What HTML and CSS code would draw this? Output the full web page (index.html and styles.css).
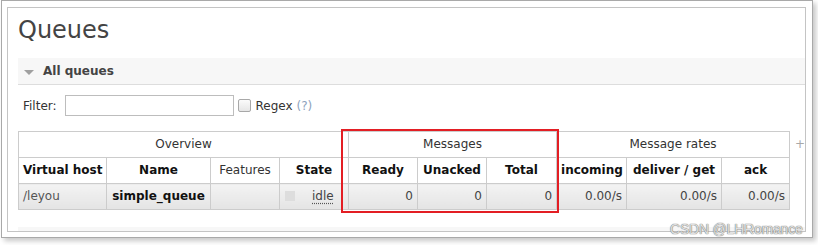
FILE: index.html
```html
<!DOCTYPE html>
<html>
<head>
<meta charset="utf-8">
<link rel="stylesheet" href="styles.css">
</head>
<body>
<div class="frame">
  <div class="page">
    <h1 class="title">Queues</h1>
    <div class="section">
      <div class="section-head"><span class="tri"></span><span class="section-title">All queues</span></div>
      <div class="filter-row">
        <span class="filter-label">Filter:</span>
        <span class="filter-input"></span>
        <span class="checkbox"></span>
        <span class="regex">Regex <span class="help">(?)</span></span>
      </div>
      <div class="table-row">
        <table class="queues">
          <colgroup>
            <col class="c-vhost"><col class="c-name"><col class="c-feat"><col class="c-state">
            <col class="c-ready"><col class="c-unacked"><col class="c-total">
            <col class="c-in"><col class="c-deliver"><col class="c-ack">
          </colgroup>
          <thead>
            <tr class="group-row">
              <th colspan="4">Overview</th>
              <th colspan="3">Messages</th>
              <th colspan="3">Message rates</th>
            </tr>
            <tr class="col-row">
              <th>Virtual host</th>
              <th>Name</th>
              <th class="light">Features</th>
              <th>State</th>
              <th>Ready</th>
              <th>Unacked</th>
              <th>Total</th>
              <th>incoming</th>
              <th>deliver / get</th>
              <th>ack</th>
            </tr>
          </thead>
          <tbody>
            <tr class="data-row">
              <td class="vhost">/leyou</td>
              <td class="name">simple_queue</td>
              <td></td>
              <td class="state"><span class="state-box"></span><abbr class="idle">idle</abbr></td>
              <td class="num">0</td>
              <td class="num">0</td>
              <td class="num">0</td>
              <td class="num">0.00/s</td>
              <td class="num">0.00/s</td>
              <td class="num">0.00/s</td>
            </tr>
          </tbody>
        </table>
        <span class="plus">+</span>
      </div>
    </div>
    <div class="section-head next-head"></div>
  </div>
  <div class="annot"></div>
  <div class="watermark">CSDN @LHRomance</div>
</div>
</body>
</html>
```

FILE: styles.css
```css
html, body {
  margin: 0;
  padding: 0;
  background: #ffffff;
}

body {
  width: 818px;
  height: 245px;
  position: relative;
  overflow: hidden;
  font-family: "DejaVu Sans", Verdana, sans-serif;
  font-size: 12px;
  color: #444444;
}

.frame {
  margin-left: 1px;
  width: 799px;
  height: 225px;
  padding: 6px 6px 5px 5px;
  border: 1px solid #a9a9a9;
  box-shadow: 3px 3px 5px rgba(0, 0, 0, 0.22);
  background: #ffffff;
}

.page {
  box-sizing: border-box;
  width: 799px;
  height: 225px;
  border: 1px solid #c4c4c4;
  padding-left: 10px;
  overflow: hidden;
}

.title {
  margin: 7px 0 0 0;
  font-size: 24px;
  line-height: 30px;
  font-weight: normal;
  color: #444444;
}

.section {
  margin-top: 13px;
}

.section-head {
  display: flex;
  align-items: center;
  height: 26px;
  padding-left: 6px;
  background: #f7f7f7;
  border-bottom: 1px solid #dddddd;
}

.tri {
  width: 0;
  height: 0;
  border-left: 5px solid transparent;
  border-right: 5px solid transparent;
  border-top: 5px solid #a0a0a0;
  margin-top: 2px;
  margin-right: 9px;
}

.section-title {
  font-weight: bold;
  color: #444444;
  line-height: 15px;
}

.filter-row {
  display: flex;
  align-items: center;
  margin-top: 10px;
  padding-left: 5px;
  height: 21px;
  color: #333333;
}

.filter-label {
  margin-right: 8px;
}

.filter-input {
  box-sizing: border-box;
  width: 169px;
  height: 21px;
  border: 1px solid #bdbdbd;
  background: #ffffff;
}

.checkbox {
  box-sizing: border-box;
  width: 13px;
  height: 13px;
  margin-left: 4px;
  margin-right: 5px;
  border: 1px solid #a8a8a8;
  border-radius: 2px;
  background: linear-gradient(#fbfbfb, #e6e6e6);
}

.regex {
  color: #333333;
}

.help {
  color: #8ea3bd;
}

.table-row {
  display: flex;
  align-items: flex-start;
  margin-top: 15px;
}

.queues {
  flex-shrink: 0;
  table-layout: fixed;
  border-collapse: collapse;
  width: 772px;
}

.c-vhost { width: 88px; }
.c-name { width: 104px; }
.c-feat { width: 69px; }
.c-state { width: 69px; }
.c-ready { width: 69px; }
.c-unacked { width: 69px; }
.c-total { width: 70px; }
.c-in { width: 70px; }
.c-deliver { width: 95px; }
.c-ack { width: 68px; }

.queues th,
.queues td {
  border: 1px solid #cccccc;
  padding: 5px 4px 5px 4px;
  line-height: 15px;
  height: 15px;
  white-space: nowrap;
  overflow: hidden;
}

.group-row th {
  font-weight: normal;
  color: #333333;
  text-align: center;
  background: #ffffff;
}

.col-row th {
  font-weight: bold;
  color: #111111;
  text-align: center;
  background: #ffffff;
}

.col-row th.light {
  font-weight: normal;
  color: #333333;
}

.data-row td {
  background: linear-gradient(#f3f3f3, #e4e4e4);
  color: #444444;
}

.queues td.vhost {
  text-align: left;
  color: #555555;
}

.queues td.name {
  text-align: center;
  font-weight: bold;
  color: #111111;
}

.queues td.num {
  text-align: right;
}

.state-box {
  display: inline-block;
  width: 10px;
  height: 10px;
  background: #dddddd;
  margin-left: 1px;
  margin-right: 17px;
  vertical-align: -1px;
}

.idle {
  color: #444444;
  text-decoration: underline dotted #555555;
  text-underline-offset: 3px;
}

.plus {
  flex-shrink: 0;
  margin-left: 5px;
  margin-top: 6px;
  color: #a8a8a8;
  font-size: 12px;
  line-height: 15px;
}

.next-head {
  margin-top: 17px;
}

.annot {
  position: absolute;
  left: 341px;
  top: 129px;
  box-sizing: border-box;
  width: 218px;
  height: 84px;
  border: 2px solid #e31e24;
}

.watermark {
  position: absolute;
  left: 670px;
  top: 221px;
  font-family: "Liberation Sans", Arial, sans-serif;
  font-size: 14px;
  line-height: 16px;
  color: #e0e0e0;
  text-shadow: 0 0 1px #707070, 0 0 1px #707070;
  letter-spacing: -0.2px;
}
```
